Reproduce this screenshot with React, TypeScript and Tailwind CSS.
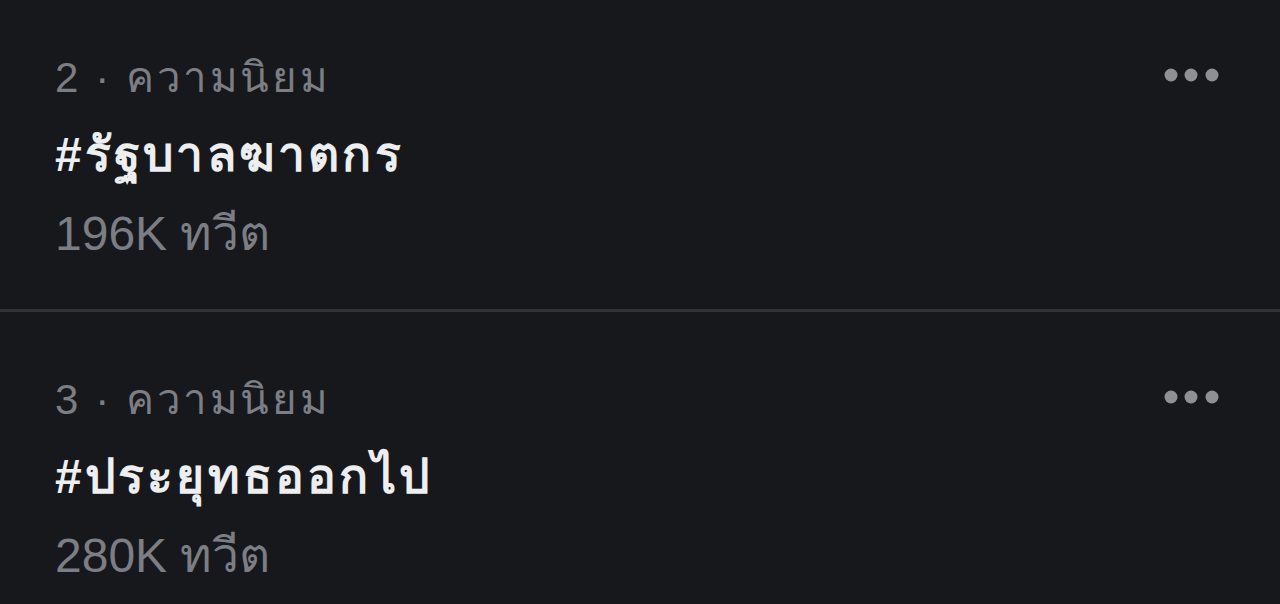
type Trend = { rank: number; tag: string; count: string }

const trends: Trend[] = [
  { rank: 2, tag: '#รัฐบาลฆาตกร', count: '196K ทวีต' },
  { rank: 3, tag: '#ประยุทธออกไป', count: '280K ทวีต' },
]

function Dots() {
  return (
    <svg width="60" height="20" viewBox="0 0 60 20" className="-mt-[6px] text-[#8d9095]" fill="currentColor">
      <circle cx="9" cy="10" r="6.5" />
      <circle cx="29" cy="10" r="6.5" />
      <circle cx="50" cy="10" r="6.5" />
    </svg>
  )
}

function TrendRow({ t, first }: { t: Trend; first?: boolean }) {
  return (
    <div className={first ? 'pl-[55px] pr-[58px] pt-[48px] pb-[43px]' : 'pl-[55px] pr-[58px] pt-[58px]'}>
      <div className="flex items-center justify-between">
        <span className="text-[42px] leading-[60px] tracking-[2.6px] text-[#7b7e83]">
          {t.rank} · ความนิยม
        </span>
        <Dots />
      </div>
      <div className="text-[48px] leading-[94px] tracking-[3.2px] font-bold text-[#eceef0]">{t.tag}</div>
      <div className="text-[48px] leading-[64px] text-[#7b7e83]">{t.count}</div>
    </div>
  )
}

export default function App() {
  return (
    <div
      className="w-[1280px] h-[604px] overflow-hidden bg-[#17181c]"
      style={{ fontFamily: '"Liberation Sans", "Noto Sans", sans-serif' }}
    >
      <TrendRow t={trends[0]} first />
      <div className="h-[3px] bg-[#2f3236]" />
      <TrendRow t={trends[1]} />
    </div>
  )
}
